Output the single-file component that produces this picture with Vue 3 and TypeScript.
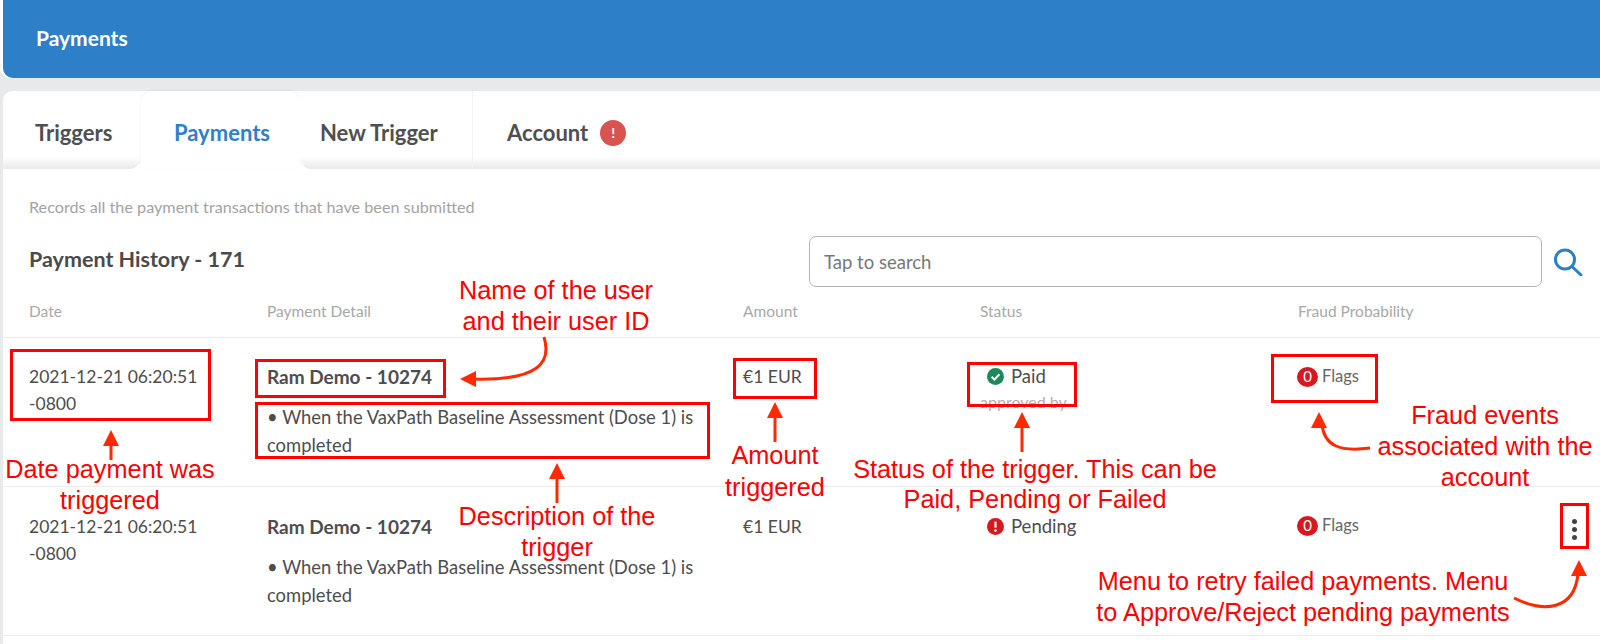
<script setup lang="ts">
interface Payment {
  date: string
  zone: string
  name: string
  detail: string
  amount: string
  status: 'paid' | 'pending'
  flags: number
  menu: boolean
}

const tabs = [
  { label: 'Triggers', cls: 'tab--triggers' },
  { label: 'Payments', cls: 'tab--active' },
  { label: 'New Trigger', cls: 'tab--new' },
  { label: 'Account', cls: 'tab--account', alert: true }
]

const payments: Payment[] = [
  {
    date: '2021-12-21 06:20:51',
    zone: '-0800',
    name: 'Ram Demo - 10274',
    detail: '• When the VaxPath Baseline Assessment (Dose 1) is completed',
    amount: '€1 EUR',
    status: 'paid',
    flags: 0,
    menu: false
  },
  {
    date: '2021-12-21 06:20:51',
    zone: '-0800',
    name: 'Ram Demo - 10274',
    detail: '• When the VaxPath Baseline Assessment (Dose 1) is completed',
    amount: '€1 EUR',
    status: 'pending',
    flags: 0,
    menu: true
  }
]

// annotation boxes: x, y, w, h
const boxes = [
  [10, 349, 201, 72],
  [255, 359, 191, 39],
  [255, 402, 455, 57],
  [733, 358, 84, 41],
  [967, 362, 110, 45],
  [1271, 354, 107, 49],
  [1560, 503, 29, 46]
]

// annotation text lines: centre x, centre y, text
const notes: [number, number, string][] = [
  [556, 290, 'Name of the user'],
  [556, 321, 'and their user ID'],
  [110, 469, 'Date payment was'],
  [110, 500, 'triggered'],
  [557, 516, 'Description of the'],
  [557, 547, 'trigger'],
  [775, 455, 'Amount'],
  [775, 487, 'triggered'],
  [1035, 469, 'Status of the trigger. This can be'],
  [1035, 499, 'Paid, Pending or Failed'],
  [1485, 415, 'Fraud events'],
  [1485, 446, 'associated with the'],
  [1485, 477, 'account'],
  [1303, 581, 'Menu to retry failed payments. Menu'],
  [1303, 612, 'to Approve/Reject pending payments']
]

function boxStyle(b: number[]) {
  return { left: b[0] + 'px', top: b[1] + 'px', width: b[2] + 'px', height: b[3] + 'px' }
}

function noteStyle(n: [number, number, string]) {
  return { left: n[0] + 'px', top: n[1] + 'px' }
}
</script>

<template>
  <div class="page">
    <header class="topbar">Payments</header>

    <main class="card">
      <nav class="tabs">
        <div v-for="tab in tabs" :key="tab.label" class="tab" :class="tab.cls">
          {{ tab.label }}
          <span v-if="tab.alert" class="tab__alert">!</span>
        </div>
        <div class="tabs__rest"></div>
      </nav>

      <p class="intro">Records all the payment transactions that have been submitted</p>

      <div class="toolbar">
        <h2 class="toolbar__title">Payment History - 171</h2>
        <div class="search">
          <div class="search__input">Tap to search</div>
          <svg class="search__icon" width="30" height="28" viewBox="0 0 30 28" fill="none">
            <circle cx="12" cy="11.5" r="9.5" stroke="#2a7fc9" stroke-width="3" />
            <path d="M19 18.5l9 8.5" stroke="#2a7fc9" stroke-width="3" stroke-linecap="round" />
          </svg>
        </div>
      </div>

      <div class="row row--head">
        <div>Date</div>
        <div>Payment Detail</div>
        <div>Amount</div>
        <div>Status</div>
        <div>Fraud Probability</div>
        <div></div>
      </div>

      <div v-for="(p, i) in payments" :key="i" class="row" :class="{ 'row--low': p.menu }">
        <div class="cell">{{ p.date }}<br />{{ p.zone }}</div>
        <div class="cell">
          <div class="cell__name">{{ p.name }}</div>
          <div class="cell__detail">{{ p.detail }}</div>
        </div>
        <div class="cell">{{ p.amount }}</div>
        <div class="cell">
          <div class="status">
            <svg v-if="p.status === 'paid'" width="17" height="17" viewBox="0 0 17 17">
              <circle cx="8.5" cy="8.5" r="8.5" fill="#1c8a5a" />
              <path d="M4.6 8.8l2.8 2.8 5-5.4" fill="none" stroke="#fff" stroke-width="2" />
            </svg>
            <svg v-else width="17" height="17" viewBox="0 0 17 17">
              <circle cx="8.5" cy="8.5" r="8.5" fill="#d9171e" />
              <path d="M8.5 3.6v6" stroke="#fff" stroke-width="2.2" />
              <circle cx="8.5" cy="12.6" r="1.3" fill="#fff" />
            </svg>
            <span>{{ p.status === 'paid' ? 'Paid' : 'Pending' }}</span>
          </div>
          <div v-if="p.status === 'paid'" class="status__by">approved by</div>
        </div>
        <div class="cell">
          <div class="flags">
            <span class="flags__count">{{ p.flags }}</span>
            <span>Flags</span>
          </div>
        </div>
        <div class="cell">
          <div v-if="p.menu" class="kebab"><i></i><i></i><i></i></div>
        </div>
      </div>
    </main>

    <div class="notes">
      <div v-for="(b, i) in boxes" :key="i" class="notes__box" :style="boxStyle(b)"></div>
      <div v-for="n in notes" :key="n[2]" class="notes__text" :style="noteStyle(n)">{{ n[2] }}</div>
      <svg class="notes__arrows" width="1600" height="644" viewBox="0 0 1600 644" fill="none">
        <g stroke="#ff2a00" stroke-width="3">
          <path d="M111 444v16" />
          <path d="M557 478v25" />
          <path d="M775 416v26" />
          <path d="M1022 426v26" />
          <path d="M544 337c8 26-6 44-72 42" />
          <path d="M1322 424c2 22 18 28 48 24" />
          <path d="M1514 598c28 14 60 14 64-24" />
        </g>
        <g fill="#ff2a00">
          <path d="M111 430l-8 16h16z" />
          <path d="M557 463l-8 16h16z" />
          <path d="M775 402l-8 16h16z" />
          <path d="M1022 412l-8 16h16z" />
          <path d="M460 379l16-8v16z" />
          <path d="M1319 412l-8 16h16z" />
          <path d="M1579 560l-8 16h16z" />
        </g>
      </svg>
    </div>
  </div>
</template>

<style scoped>
.page {
  position: relative;
  width: 1600px;
  height: 644px;
  overflow: hidden;
  background: #e8e9ea;
  font-family: Lato, "Open Sans", sans-serif;
  color: #4a4a4a;
}

.topbar {
  height: 78px;
  margin-left: 3px;
  padding: 0 0 4px 33px;
  display: flex;
  align-items: center;
  background: #2d7fc8;
  border-bottom-left-radius: 10px;
  box-shadow: -3px 0 0 #fff;
  color: #fff;
  font-size: 21px;
  font-weight: 700;
  box-sizing: border-box;
}

.card {
  margin: 13px 0 0 3px;
  border-top-left-radius: 10px;
  height: 553px;
  background: #fff;
}

.tabs {
  display: flex;
  height: 78px;
}

.tab {
  display: flex;
  align-items: center;
  font-size: 22px;
  font-weight: 700;
  color: #4f4f4f;
  padding-top: 5px;
  box-sizing: border-box;
  background: linear-gradient(to bottom, #fff 84%, #e9e9ea 100%);
}

.tab--triggers {
  width: 138px;
  padding-left: 32px;
  border-top-left-radius: 10px;
  border-bottom-right-radius: 12px;
}

.tab--active {
  width: 159px;
  padding-left: 33px;
  color: #2f80c9;
  background: #fff;
  border-radius: 12px 12px 0 0;
  box-shadow: 0 -1px 3px rgba(0, 0, 0, 0.06);
}

.tab--new {
  width: 173px;
  padding-left: 20px;
  border-bottom-left-radius: 12px;
  border-right: 1px solid #f3f3f3;
}

.tab--account {
  padding-left: 34px;
  width: 200px;
  gap: 12px;
}

.tabs__rest {
  flex: 1;
  background: linear-gradient(to bottom, #fff 84%, #e9e9ea 100%);
}

.tab__alert {
  width: 26px;
  height: 26px;
  border-radius: 50%;
  background: #d9534f;
  color: #fff;
  font-size: 14px;
  display: flex;
  align-items: center;
  justify-content: center;
}

.intro {
  margin: 0;
  padding: 29px 0 0 26px;
  font-size: 16.2px;
  line-height: 18px;
  color: #a3a3a3;
}

.toolbar {
  display: flex;
  align-items: center;
  justify-content: space-between;
  margin-top: 20px;
  padding: 0 17px 0 26px;
  height: 51px;
}

.toolbar__title {
  margin: 0 0 5px;
  font-size: 21.5px;
  font-weight: 700;
  color: #4a4a4a;
}

.search {
  display: flex;
  align-items: center;
  gap: 11px;
}

.search__input {
  width: 733px;
  height: 51px;
  box-sizing: border-box;
  padding-left: 14px;
  display: flex;
  align-items: center;
  border: 1px solid #b5b5b5;
  border-radius: 7px;
  font-size: 18.5px;
  color: #777;
}

.row {
  display: grid;
  grid-template-columns: 238px 476px 237px 318px 262px 1fr;
  padding-left: 26px;
  height: 149px;
  box-sizing: border-box;
  border-bottom: 1px solid #ececec;
}

.row--head {
  height: 51px;
  padding-top: 15px;
  font-size: 15.5px;
  line-height: 18px;
  color: #a8a8a8;
}

.cell {
  padding-top: 25px;
  font-size: 17.5px;
  line-height: 27px;
  color: #4d4d4d;
}

.row--low .cell {
  padding-top: 26px;
}

.row--low .flags {
  margin-top: -1px;
}

.row--low .kebab {
  margin-top: 6px;
}

.cell__name {
  font-size: 19px;
  font-weight: 700;
  margin-bottom: 13px;
}

.cell__detail {
  width: 440px;
  font-size: 18.4px;
  line-height: 28px;
}

.status {
  display: flex;
  align-items: center;
  gap: 7px;
  margin-left: 7px;
  font-size: 18.5px;
}

.status__by {
  font-size: 16px;
  color: #b0b0b0;
  line-height: 24px;
}

.flags {
  display: flex;
  align-items: center;
  gap: 4px;
  font-size: 16.5px;
  color: #666;
  margin-left: -1px;
}

.flags__count {
  width: 21px;
  height: 20px;
  border-radius: 50%;
  background: #d8171e;
  color: #fff;
  font-size: 15px;
  display: flex;
  align-items: center;
  justify-content: center;
}

.kebab {
  display: flex;
  flex-direction: column;
  align-items: center;
  gap: 3px;
  width: 28px;
}

.kebab i {
  width: 5px;
  height: 5px;
  border-radius: 50%;
  background: #444;
}

.notes {
  position: absolute;
  inset: 0;
  pointer-events: none;
}

.notes__box {
  position: absolute;
  box-sizing: border-box;
  border: 3px solid #ff0000;
}

.notes__text {
  position: absolute;
  transform: translate(-50%, -50%);
  white-space: nowrap;
  font-family: "Liberation Sans", Arial, sans-serif;
  font-size: 25.3px;
  line-height: 28px;
  color: #ff0000;
}

.notes__arrows {
  position: absolute;
  left: 0;
  top: 0;
}
</style>
